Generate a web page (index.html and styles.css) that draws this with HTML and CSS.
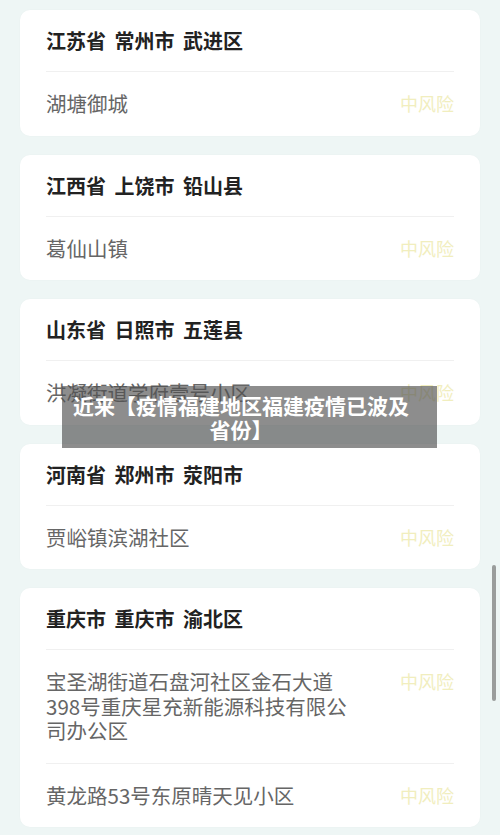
FILE: index.html
```html
<!DOCTYPE html>
<html lang="zh-CN">
<head>
<meta charset="utf-8">
<title>风险地区</title>
<link rel="stylesheet" href="styles.css">
</head>
<body>
<div class="list">
  <div class="card">
    <div class="title">江苏省 常州市 武进区</div>
    <div class="item"><div class="addr">湖塘御城</div><div class="risk">中风险</div></div>
  </div>
  <div class="card">
    <div class="title">江西省 上饶市 铅山县</div>
    <div class="item"><div class="addr">葛仙山镇</div><div class="risk">中风险</div></div>
  </div>
  <div class="card">
    <div class="title">山东省 日照市 五莲县</div>
    <div class="item"><div class="addr">洪凝街道学府壹号小区</div><div class="risk">中风险</div></div>
  </div>
  <div class="card">
    <div class="title">河南省 郑州市 荥阳市</div>
    <div class="item"><div class="addr">贾峪镇滨湖社区</div><div class="risk">中风险</div></div>
  </div>
  <div class="card">
    <div class="title">重庆市 重庆市 渝北区</div>
    <div class="item"><div class="addr">宝圣湖街道石盘河社区金石大道398号重庆星充新能源科技有限公司办公区</div><div class="risk">中风险</div></div>
    <div class="item"><div class="addr">黄龙路53号东原晴天见小区</div><div class="risk">中风险</div></div>
  </div>
</div>
<div class="overlay">近来【疫情福建地区福建疫情已波及省份】</div>
<div class="scrollbar"></div>
</body>
</html>
```
FILE: styles.css
```css
html, body {
  margin: 0;
  padding: 0;
  height: 835px;
  overflow: hidden;
}
body {
  background: #eef6f5;
  font-family: "Noto Sans CJK SC", "Noto Sans", sans-serif;
  position: relative;
}
.list {
  display: flex;
  flex-direction: column;
  gap: 19px;
  padding: 10px 20px 0 20px;
}
.card {
  background: #ffffff;
  border-radius: 10px;
  padding: 0 26px;
  box-shadow: 0 0 2px rgba(0, 0, 0, 0.03);
}
.title {
  font-size: 20px;
  font-weight: 700;
  color: #222222;
  line-height: 24px;
  word-spacing: 4px;
  padding: 19px 0 18px;
  border-bottom: 1px solid #f0f0f0;
}
.item {
  display: flex;
  align-items: flex-start;
  padding: 19px 0 20px;
}
.item + .item {
  border-top: 1px solid #f0f0f0;
}
.addr {
  font-size: 20.5px;
  line-height: 24.5px;
  color: #666666;
  max-width: 312px;
}
.risk {
  margin-left: auto;
  flex-shrink: 0;
  font-size: 18px;
  line-height: 24.5px;
  color: #f1eebe;
}
.overlay {
  position: absolute;
  left: 62px;
  top: 386px;
  width: 375px;
  height: 62px;
  box-sizing: border-box;
  padding: 7px 27px 7px 10px;
  background: rgba(80, 80, 80, 0.65);
  color: #ffffff;
  font-size: 21px;
  font-weight: 700;
  line-height: 24px;
  text-align: center;
}
.scrollbar {
  position: absolute;
  left: 492px;
  top: 565px;
  width: 4px;
  height: 136px;
  border-radius: 2px;
  background: #9a9d9c;
}
```
